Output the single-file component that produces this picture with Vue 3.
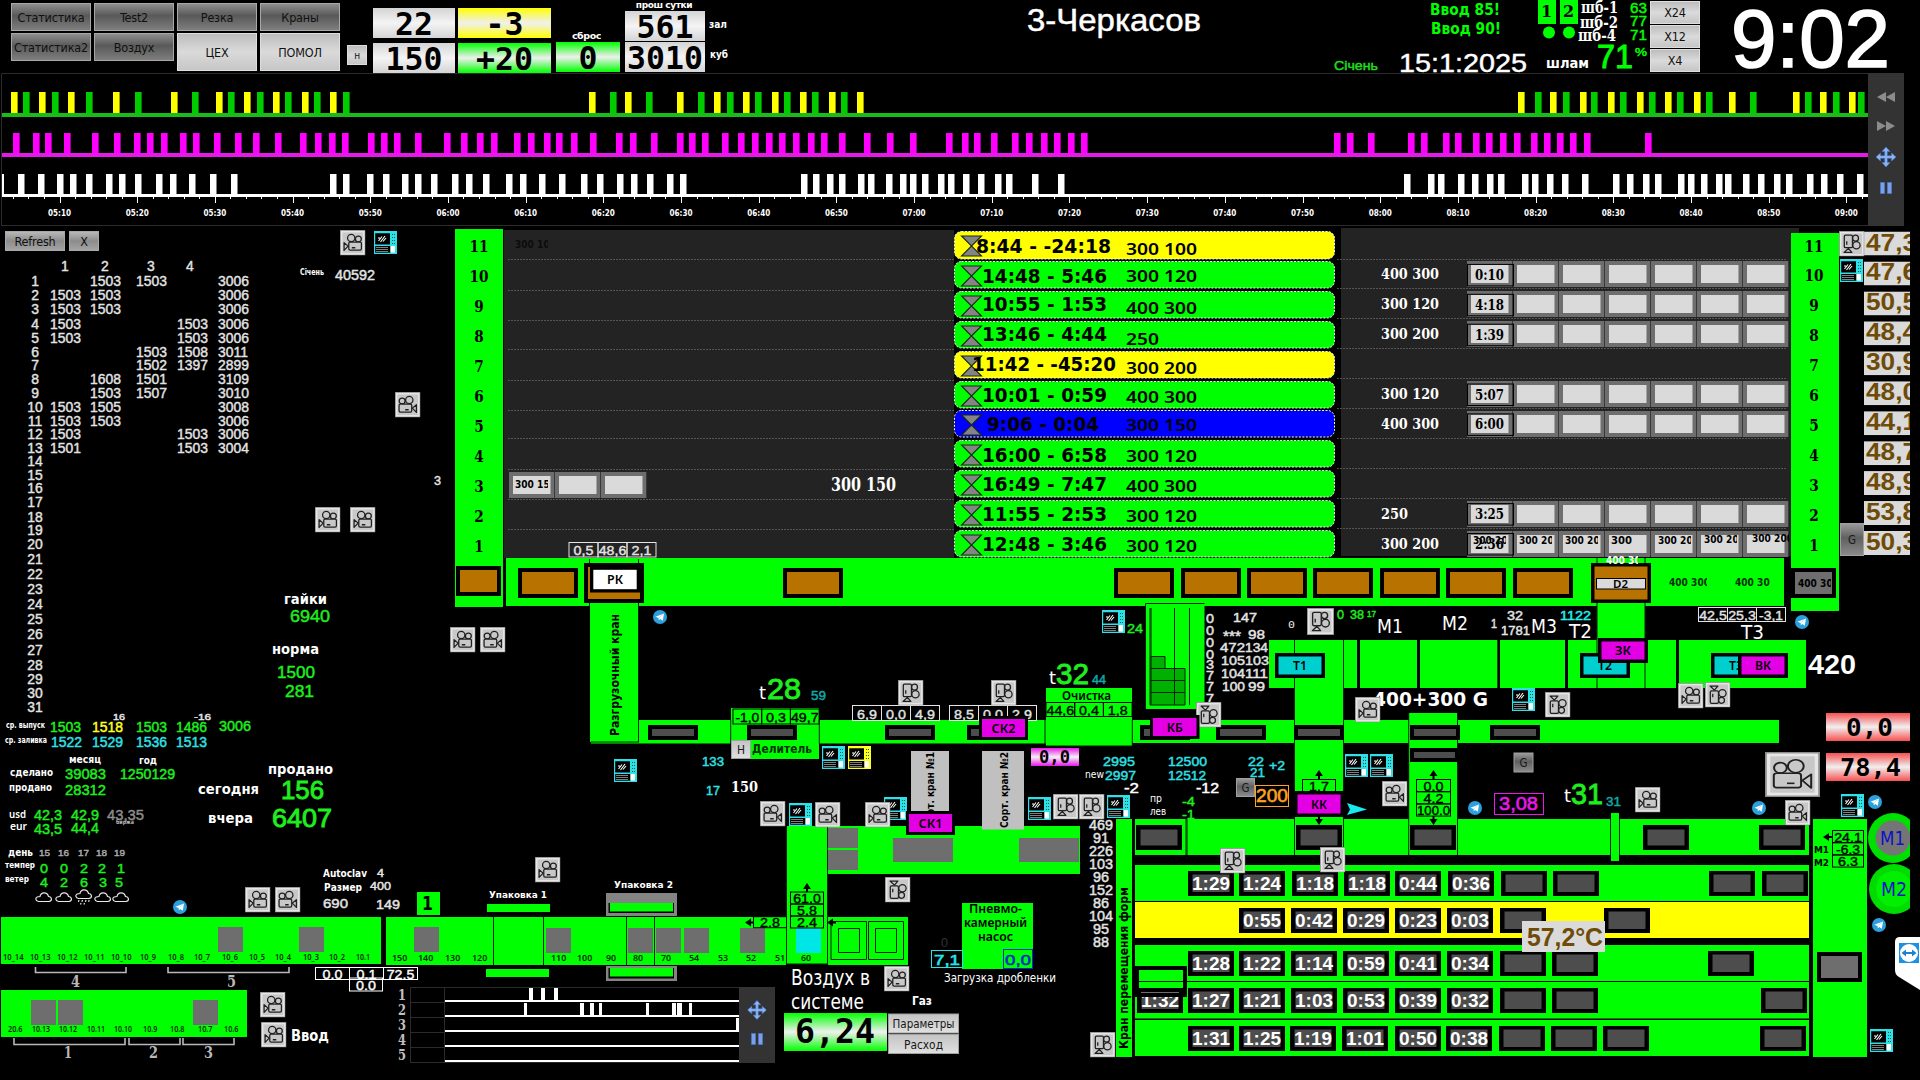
<script setup>
const navButtons = [
  ['Статистика', 'dark'], ['Test2', 'dark'], ['Резка', 'dark'], ['Краны', 'dark'],
  ['Статистика2', 'dark'], ['Воздух', 'dark'], ['ЦЕХ', 'light'], ['ПОМОЛ', 'light'],
]

// label rows: x, baseline, width, size, colour, text, font class
const board = [
  [710, 28, 18, 10, '#fff', 'зал', 'tb'], [711, 58, 18, 10, '#fff', 'куб', 'tb'],
  [1028, 31, 174, 31, '#fff', '3-Черкасов', 'am'],
  [1335, 70, 44, 12, '#1fdc1f', 'Січень', 'am'],
  [1400, 72, 128, 26, '#fff', '15:1:2025', 'am'],
  [1431, 15, 70, 15, '#00ff00', 'Ввод 85!', 'tb'], [1432, 34, 70, 15, '#00ff00', 'Ввод 90!', 'tb'],
  [1582, 13, 37, 16, '#fff', 'шб-1', 's'], [1581, 28, 38, 16, '#fff', 'шб-2', 's'], [1579, 41, 38, 16, '#fff', 'шб-4', 's'],
  [1631, 13, 17, 15, '#00ff00', '63', 'am'], [1631, 26, 17, 14, '#00ff00', '77', 'am'], [1631, 40, 17, 14, '#00ff00', '71', 'am'],
  [1547, 68, 43, 14, '#fff', 'шлам', 'tb'],
  [1598, 68, 36, 34, '#00ff00', '71', 'ah'], [1636, 56, 12, 11, '#00ff00', '%', 'am'],
]

const yellowBars = [11, 39, 68, 113, 171, 216, 244, 273, 302, 330, 589, 625, 677, 714, 743, 772, 800, 829, 857, 1518, 1550, 1580, 1608, 1637, 1665, 1694, 1729, 1793, 1820, 1849]
const greenBars = [23, 52, 86, 135, 192, 228, 257, 285, 314, 343, 610, 646, 698, 727, 755, 784, 812, 841, 1535, 1563, 1591, 1620, 1649, 1677, 1706, 1750, 1805, 1833, 1858]
const magentaBars = [13, 33, 45, 64, 92, 114, 134, 147, 161, 180, 193, 214, 235, 253, 275, 300, 315, 329, 342, 368, 381, 394, 415, 444, 461, 477, 491, 514, 528, 544, 556, 571, 590, 616, 630, 651, 677, 689, 702, 722, 738, 752, 766, 779, 793, 808, 821, 839, 864, 887, 910, 946, 962, 974, 991, 1012, 1026, 1041, 1054, 1068, 1081, 1334, 1347, 1368, 1408, 1421, 1443, 1455, 1473, 1486, 1500, 1514, 1531, 1544, 1557, 1570, 1584, 1645]
const whiteBars = [18, 38, 57, 70, 86, 106, 119, 135, 156, 170, 189, 210, 231, 330, 343, 367, 383, 402, 415, 431, 452, 466, 483, 506, 520, 539, 559, 581, 597, 617, 631, 647, 667, 680, 801, 813, 827, 839, 858, 868, 886, 900, 910, 922, 938, 948, 963, 978, 995, 1006, 1032, 1058, 1404, 1428, 1438, 1458, 1472, 1487, 1498, 1522, 1532, 1547, 1562, 1582, 1613, 1627, 1643, 1655, 1678, 1688, 1701, 1716, 1725, 1743, 1758, 1774, 1786, 1807, 1821, 1837, 1857]
const ticks = []
for (let i = -3; i <= 117; i++) ticks.push([Math.round(59.5 + i * 15.538) + 0.5, i % 5 === 0 ? 6 : 2])
const hours = Array.from({ length: 24 }, (_, i) => {
  const m = 310 + i * 10
  return [59.5 + i * 77.69, String(Math.floor(m / 60)).padStart(2, '0') + ':' + String(m % 60).padStart(2, '0')]
})

const dayValues = {
  1: ['', '1503', '1503', '', '3006'], 2: ['1503', '1503', '', '', '3006'], 3: ['1503', '1503', '', '', '3006'],
  4: ['1503', '', '', '1503', '3006'], 5: ['1503', '', '', '1503', '3006'], 6: ['', '', '1503', '1508', '3011'],
  7: ['', '', '1502', '1397', '2899'], 8: ['', '1608', '1501', '', '3109'], 9: ['', '1503', '1507', '', '3010'],
  10: ['1503', '1505', '', '', '3008'], 11: ['1503', '1503', '', '', '3006'], 12: ['1503', '', '', '1503', '3006'],
  13: ['1501', '', '', '1503', '3004'],
}
const dayLines = [285, 299, 313, 328, 342, 356, 369, 383, 397, 411, 425, 438, 452, 465, 479, 492, 506, 521, 534, 548, 563, 578, 593, 608, 623, 638, 654, 669, 683, 697, 711, 726]
const days = Array.from({ length: 31 }, (_, i) => ({
  n: i + 1, v: dayValues[i + 1] || ['', '', '', '', ''], h: dayLines[i + 1] - dayLines[i],
}))

const G = '#00ff00'
const W = '#e4e4e4'
const C = '#2fe0e6'
const L = '#1fee1f'
const K = '#000'

const chambers = [
  { n: 11, y: 231, h: 28, c: '#ffff00', t: '8:44 - -24:18', x: 976, w: 135, b: 253, s: '300 100', sb: 255 },
  { n: 10, y: 261, h: 27, c: G, t: '14:48 - 5:46', b: 283, s: '300 120', sb: 282, r: '400 300', rt: '0:10' },
  { n: 9, y: 291, h: 27, c: G, t: '10:55 - 1:53', b: 311, s: '400 300', sb: 314, r: '300 120', rt: '4:18' },
  { n: 8, y: 321, h: 27, c: G, t: '13:46 - 4:44', b: 341, s: '250', sb: 345, r: '300 200', rt: '1:39' },
  { n: 7, y: 351, h: 27, c: '#ffff00', t: '11:42 - -45:20', x: 972, w: 144, b: 371, s: '300 200', sb: 374 },
  { n: 6, y: 381, h: 27, c: G, t: '10:01 - 0:59', b: 402, s: '400 300', sb: 403, r: '300 120', rt: '5:07' },
  { n: 5, y: 410, h: 27, c: '#0000ff', t: '9:06 - 0:04', x: 987, w: 112, b: 431, s: '300 150', sb: 431, r: '400 300', rt: '6:00' },
  { n: 4, y: 440, h: 27, c: G, t: '16:00 - 6:58', b: 462, s: '300 120', sb: 462 },
  { n: 3, y: 470, h: 27, c: G, t: '16:49 - 7:47', b: 491, s: '400 300', sb: 492 },
  { n: 2, y: 500, h: 27, c: G, t: '11:55 - 2:53', b: 521, s: '300 120', sb: 522, r: '250', rt: '3:25' },
  { n: 1, y: 530, h: 27, c: G, t: '12:48 - 3:46', b: 551, s: '300 120', sb: 552, r: '300 200', rt: '2:36' },
]
const leftLines = [259.5, 290.5, 320.5, 349.5, 380.5, 410.5, 438.5, 469.5, 499.5, 529.5]
const rightLines = [259.5, 288.5, 318.5, 348.5, 378.5, 408.5, 438.5, 468.5, 498.5, 528.5]
const temps = ['47,3', '47,6', '50,5', '48,4', '30,9', '48,0', '44,1', '48,7', '48,9', '53,8', '50,3']

// labels cut by the edge of their field: x, baseline, visible width, colour, text
const cut = [
  [1473, 544, 33, K, '300 200'], [1519, 544, 33, K, '300 200'], [1565, 544, 33, K, '300 200'], [1658, 544, 33, K, '300 200'], [1704, 543, 33, K, '300 200'],
  [1611, 544, 33, K, '300'], [1752, 542, 37, K, '300 200'],
  [515, 488, 33, K, '300 150'], [515, 248, 33, '#0c0c0c', '300 100'],
  [1669, 586, 38, '#033003', '400 300'], [1735, 586, 35, '#033003', '400 300'], [1798, 587, 33, K, '400 300'], [1606, 564, 32, '#fff', '400 300'],
]

// filled areas of the floor plan: x, y, width, height, colour
const areas = [
  [455, 229, 48, 378, G], [1791, 233, 48, 378, G], [506, 558, 1278, 48, G],
  [590, 606, 48, 136, G], [591, 720, 541, 23.5, G], [1132, 720, 647, 23, G],
  [731, 708, 88, 51, G], [1046, 688, 86, 58, G], [1146, 604, 58.5, 105, G],
  [1269, 640, 537, 48, G], [1295, 688, 48, 131, G], [1409, 713, 48, 106, G], [1597, 606, 48, 34, G],
  [1135, 819, 674, 36, G], [1611, 813, 8, 48, G], [1116, 819, 16, 238, G], [1813, 819, 54, 238, G],
  [1135, 865, 674, 36, G], [1135, 902, 674, 36, '#ffff00'], [1135, 945, 674, 36, G], [1135, 982, 674, 36.5, G], [1135, 1020, 674, 36, G],
  [826, 826, 254, 48, G], [787, 826, 40, 138, G], [962, 903, 71, 66, G],
  [1, 917, 380, 47, G], [386, 917, 401, 48, G], [827, 917, 81, 48, G], [1, 990, 246, 47, G], [417, 892, 23, 23, G],
  [487, 904, 63, 8, G], [486, 969, 63, 8, G],
  [606, 893, 71, 23, '#848484'], [608.5, 903, 65.5, 10, K], [610, 903, 63, 8.5, G],
  [606, 966, 71, 15, '#848484'], [608.5, 968, 65.5, 10.5, K], [610, 968, 63, 8.5, G],
  [1357, 640, 3, 48, K], [1417, 640, 3, 48, K], [1497.3, 640, 2.7, 48, K], [1565, 640, 3, 48, K], [1676, 640, 3, 48, K],
  [1150, 656, 15, 12, '#00b000'], [1150, 668, 35, 37, '#00b000'],
  [911, 751, 38, 60, '#c0c0c0'], [982, 751, 42, 78.5, '#c0c0c0'],
  ...[[218, 927], [299, 927], [414, 927], [546, 928], [628, 928], [656, 928], [684, 928], [740, 928], [31, 1000], [58, 1000], [193, 1000]].map(([x, y]) => [x, y, 25, 25, '#6e6e6e']),
  [828, 828, 30, 20, '#6e6e6e'], [828, 850, 30, 20, '#6e6e6e'], [893, 838, 60, 24, '#6e6e6e'], [1019, 838, 60, 24, '#6e6e6e'],
  [796, 928, 25, 25, '#00e5e5'],
]
const lines = [
  'M589.5 559V606M638.5 559V742', 'M591 742H639', 'M1597 558V688M1645 558V688', 'M1294.5 640V855M1343.5 640V855', 'M1408.7 713V855M1457.5 713V855',
  'M1187 819V855M1186 819V855', 'M1610.5 819V855M1619.5 819V855', 'M730.7 720V744M819.3 720V744M1132.3 720V746M1045 720V744M1132 746H1046',
  'M493.5 917V965M543.5 917V965M626.5 917V965M654.5 917V965M786.5 826V965M827.5 826V965M787 964H827',
  'M1145.5 709V603.5H1204.5', 'M1150 608V705H1185V668.5H1165V656.5H1151M1150 668.5H1165M1150 680.5H1185M1150 692.5H1185M1174.5 608V705M1189.5 608V705M1151 608V705',
  'M831 921.5H866.5V959.5H831ZM838.5 928.5H859.5V952.5H838.5ZM868.5 921.5H903.5V959.5H868.5ZM875.5 928.5H896.5V952.5H875.5Z',
]

// framed carriers: x, y, width, height, fill, frame thickness
const O = '#b87200'
const D = '#4d4d4d'
const carriers = [
  [456, 566, 45, 30, O, 4], [518, 568, 60, 30, O, 4], [584, 563, 60, 40, O, 4], [783, 568, 60, 30, O, 4],
  ...[1114, 1181, 1247, 1313, 1380, 1446, 1513].map(x => [x, 568, 60, 30, O, 4]),
  [1591, 563, 60, 40, O, 3.5], [1791, 568, 45, 30, '#6e6e6e', 4],
  ...[648, 747, 885, 967, 1140, 1216, 1294, 1410, 1490].map(x => [x, 725, 50, 15, D, 4]),
  [1410, 748, 49, 14, D, 4],
  ...[1136, 1296, 1410, 1643, 1759].map(x => [x, 825, 46, 25, D, 4.5]),
  [1817, 952, 45, 30, '#6e6e6e', 4],
]
const forms = [
  { y: 871, c: [[1188, '1:29'], [1239, '1:24'], [1292, '1:18'], [1344, '1:18'], [1395, '0:44'], [1448, '0:36'], [1501], [1553], [1709], [1762]] },
  { y: 908, c: [[1239, '0:55'], [1291, '0:42'], [1343, '0:29'], [1395, '0:23'], [1447, '0:03'], [1500], [1604]] },
  { y: 951, c: [[1188, '1:28'], [1239, '1:22'], [1291, '1:14'], [1343, '0:59'], [1395, '0:41'], [1447, '0:34'], [1500], [1552], [1708]] },
  { y: 988, c: [[1137, '1:32'], [1188, '1:27'], [1239, '1:21'], [1291, '1:03'], [1343, '0:53'], [1395, '0:39'], [1447, '0:32'], [1500], [1552], [1761]] },
  { y: 1026, c: [[1188, '1:31'], [1239, '1:25'], [1290, '1:19'], [1342, '1:01'], [1395, '0:50'], [1446, '0:38'], [1499], [1551], [1603], [1760]] },
]

// coordinate readouts: x, y, cell width, cell height, colour, values, vertical
const readouts = [
  [569, 542.5, 29, 14.5, W, ['0,5', '48,6', '2,1']], [733, 709, 28.7, 15, K, ['-1,0', '0,3', '49,7']],
  [852.5, 705.5, 29, 15, W, ['6,9', '0,0', '4,9']], [949.5, 705.5, 29, 15, W, ['8,5', '0,0', '2,9']],
  [1046, 702.5, 28.7, 14, K, ['44,6', '0,4', '1,8']], [1698.5, 607.5, 29, 14, W, ['42,5', '25,3', '-3,1']],
  [790.5, 892, 33, 12, K, ['61.0', '5.8', '2.4'], 1], [753.5, 916.7, 33, 11, K, ['2.8']],
  [1302.5, 779.5, 33, 12, K, ['1.7']], [1416.5, 779.5, 34, 12.2, K, ['0.0', '4.2', '100.0'], 1],
  [1832.5, 830.5, 31, 12.2, K, ['24.1', '-6.3', '6.3'], 1],
  [315.5, 967.5, 34, 12, '#fff', ['0.0', '0.1', '72.5']], [349.5, 978, 33, 13, '#fff', ['0.0']],
]
const cells = readouts.flatMap(([x, y, w, h, c, v, vert]) => v.map((t, i) => {
  const cx = x + (vert ? 0 : i * w)
  const cy = y + (vert ? i * h : 0)
  const tw = Math.min(w - 1, t.replace(/[.,-]/g, '').length * 7.7 + 4.5 + (t[0] === '-' ? 4 : 0))
  return { x: cx, y: cy, w, h, c, t, tw, tx: cx + (w - tw) / 2, b: cy + h - (h > 13 ? 2 : 1) }
}))

const texts = [
  [300, 275, 24, 8, '#fff', 'Січень', 'tb'], [335, 280, 40, 14, W, '40592', 'am'], [434, 485, 7, 13, W, '3', 'am'],
  [284, 604, 43, 14, '#fff', 'гайки', 'tb'], [290, 622, 40, 17, L, '6940', 'am'], [272, 654, 47, 14, '#fff', 'норма', 'tb'],
  [277, 678, 38, 17, L, '1500', 'am'], [285, 697, 29, 17, L, '281', 'am'],
  [113, 720, 12, 9.5, W, '16', 'am'], [194, 720, 17, 9.5, W, '-16', 'am'],
  [6, 728, 39, 8, '#fff', 'ср. выпуск', 'tb'], [5, 743, 42, 8, '#fff', 'ср. заливка', 'tb'],
  [50, 732, 31, 14, L, '1503', 'am'], [92, 732, 31, 14, '#ffff20', '1518', 'am'], [136, 732, 31, 14, L, '1503', 'am'], [176, 732, 31, 14, L, '1486', 'am'], [219, 731, 32, 14, L, '3006', 'am'],
  [51, 747, 31, 14, C, '1522', 'am'], [92, 747, 31, 14, C, '1529', 'am'], [136, 747, 31, 14, C, '1536', 'am'], [176, 747, 31, 14, C, '1513', 'am'],
  [69, 763, 32, 10, '#fff', 'месяц', 'tb'], [139, 764, 18, 10, '#fff', 'год', 'tb'], [10, 776, 43, 10, '#fff', 'сделано', 'tb'], [9, 791, 43, 10, '#fff', 'продано', 'tb'],
  [65, 779, 41, 14, L, '39083', 'am'], [120, 779, 55, 14, L, '1250129', 'am'], [65, 795, 41, 14, L, '28312', 'am'],
  [268, 774, 65, 14, '#fff', 'продано', 'tb'], [281, 799, 43, 26, L, '156', 'ah'], [198, 794, 61, 14, '#fff', 'сегодня', 'tb'],
  [272, 827, 60, 26, L, '6407', 'ah'], [208, 823, 45, 14, '#fff', 'вчера', 'tb'],
  [9, 818, 17, 11, '#fff', 'usd', 'tm'], [10, 830, 17, 11, '#fff', 'eur', 'tm'], [34, 820, 28, 14, L, '42,3', 'am'], [71, 820, 28, 14, L, '42,9', 'am'],
  [107, 820, 37, 14, '#8c8c8c', '43,35', 'am'], [116, 824, 18, 6, '#bbb', 'биржа', 'tb'], [34, 834, 28, 14, L, '43,5', 'am'], [71, 833, 28, 14, L, '44,4', 'am'],
  [8, 856, 25, 10, '#fff', 'день', 'tb'], ...[[39, '15'], [58, '16'], [78, '17'], [96, '18'], [114, '19']].map(([x, t]) => [x, 856, 11, 9, '#a8a8a8', t, 'am']),
  [5, 868, 30, 9, '#fff', 'темпер', 'tb'], ...[[40, '0'], [60, '0'], [80, '2'], [98, '2'], [117, '1']].map(([x, t]) => [x, 873, 8, 13.5, L, t, 'am']),
  [5, 882, 24, 9, '#fff', 'ветер', 'tb'], ...[[40, '4'], [60, '2'], [80, '6'], [99, '3'], [115, '5']].map(([x, t]) => [x, 887, 8, 13.5, L, t, 'am']),
  [323, 877, 44, 10, '#fff', 'Autoclav', 'tb'], [377, 877, 7, 11, W, '4', 'am'], [324, 891, 38, 10, '#fff', 'Размер', 'tb'], [370, 890, 21, 11, W, '400', 'am'],
  [323, 908, 25, 13, W, '690', 'am'], [376, 909, 24, 13, W, '149', 'am'], [422, 910, 11, 19, K, '1', 'tb'],
  [71, 987, 9, 16, '#b8b8b8', '4', 's'], [227, 987, 9, 16, '#b8b8b8', '5', 's'],
  [64, 1058, 8, 16, '#b8b8b8', '1', 's'], [149, 1058, 9, 16, '#b8b8b8', '2', 's'], [204, 1058, 9, 16, '#b8b8b8', '3', 's'],
  [291, 1041, 38, 15, '#fff', 'Ввод', 'tb'],
  [489, 898, 58, 9, '#fff', 'Упаковка 1', 'tb'], [614, 888, 59, 9, '#fff', 'Упаковка 2', 'tb'],
  ...[[3, '10_14'], [30, '10_13'], [57, '10_12'], [84, '10_11'], [111, '10_10']].map(([x, t]) => [x, 960, 20.5, 8, '#052a05', t, 'tm']),
  ...[[140, '10_9'], [168, '10_8'], [194, '10_7'], [222, '10_6'], [249, '10_5'], [275, '10_4'], [303, '10_3'], [329, '10_2'], [356, '10.1']].map(([x, t]) => [x, 960, t === '10.1' ? 14 : 16, 8, '#052a05', t, 'tm']),
  ...[[392, '150'], [418, '140'], [445, '130'], [472, '120'], [551, '110'], [577, '100'], [606, '90'], [633, '80'], [661, '70'], [689, '54'], [718, '53'], [746, '52'], [775, '51'], [801, '60']].map(([x, t]) => [x, 960.5, t.length * 5.1, 8.5, '#052a05', t, 'tm']),
  ...[[8, '20.6'], [32, '10.13'], [59, '10.12'], [87, '10.11'], [114, '10.10'], [143, '10.9'], [170, '10.8'], [198, '10.7'], [224, '10.6']].map(([x, t]) => [x, 1032, t.length * 3.6, 8, '#052a05', t, 'tm']),
  ...[1, 2, 3, 4, 5].map(n => [398, 985 + n * 15, 8, 14, '#c0c0c0', String(n), 's']),
  [791, 985, 79, 21, '#fff', 'Воздух в', 't'], [791, 1009, 73, 21, '#fff', 'системе', 't'], [912, 1005, 20, 12, '#fff', 'Газ', 'tb'],
  [969, 913, 53, 12.5, K, 'Пневмо-', 'tm'], [964, 927, 63, 12.5, K, 'камерный', 'tm'], [978, 941, 35, 12.5, K, 'насос', 'tm'],
  [941, 947, 7, 12, '#333', '0', 'a'], [944, 982, 112, 12, '#fff', 'Загрузка дробленки', 't'],
  ...['469', '91', '226', '103', '96', '152', '86', '104', '95', '88'].map((t, i) => [t.length === 3 ? 1089 : 1093, 829.5 + i * 13, t.length * 8, 14, W, t, 'am']),
  [702, 766, 22, 13, C, '133', 'am'], [706, 795, 14, 13, C, '17', 'am'], [731, 792, 27, 14.5, '#fff', '150', 's'],
  [1103, 766, 32, 13.5, C, '2995', 'am'], [1105, 780, 31, 13.5, C, '2997', 'am'], [1085, 778, 19, 10, '#fff', 'new', 't'], [1124, 793, 15, 14, '#fff', '-2', 'am'],
  [1168, 766, 39, 13.5, C, '12500', 'am'], [1168, 780, 38, 13.5, C, '12512', 'am'], [1196, 793, 23, 14, '#fff', '-12', 'am'],
  [1248, 766, 16, 13.5, C, '22', 'am'], [1250, 777, 15, 13.5, C, '21', 'am'], [1269, 770, 16, 13, C, '+2', 'am'],
  [1150, 802, 12, 10.5, '#fff', 'пр', 't'], [1150, 815, 16, 10.5, '#fff', 'лев', 't'], [1182, 806, 13, 13, L, '-4', 'am'], [1182, 819, 13, 13, L, '-1', 'am'],
  [759, 699, 7, 18, '#fff', 't', 't'], [767, 699, 34, 29, L, '28', 'ah'], [811, 700, 15, 12, '#10a8a8', '59', 'am'],
  [1049, 684, 7, 18, '#fff', 't', 't'], [1056, 684, 33, 29, L, '32', 'ah'], [1092, 684, 14, 12, '#10a8a8', '44', 'am'],
  [1564, 802, 7, 18, '#fff', 't', 't'], [1571, 804, 32, 29, L, '31', 'ah'], [1606, 806, 15, 12, '#10a8a8', '31', 'am'],
  [1062, 700, 49, 12.5, K, 'Очистка', 'tm'], [752, 753, 60, 13, '#033003', 'Делитель', 'tb'], [1127, 633, 16, 12, L, '24', 'am'],
  ...['0', '0', '0', '0', '3', '7', '7', '7'].map((t, i) => [1206, [623, 635, 647, 659, 669, 680, 691, 703][i], 8, 12, W, t, 'am']),
  [1233, 622, 24, 12.5, W, '147', 'am'], [1223, 641, 18, 14, W, '***', 'am'], [1248, 639, 17, 12.5, W, '98', 'am'],
  [1220, 652, 25, 12.5, W, '472', 'am'], [1245, 652, 23, 12.5, W, '134', 'am'], [1221, 665, 24, 12.5, W, '105', 'am'], [1245, 665, 24, 12.5, W, '103', 'am'],
  [1221, 678, 24, 12.5, W, '104', 'am'], [1245, 678, 23, 12.5, W, '111', 'am'], [1222, 691, 23, 12.5, W, '100', 'am'], [1248, 691, 17, 12.5, W, '99', 'am'],
  [1288, 628, 7, 9.5, W, '0', 'mr'], [1337, 619, 7, 12, L, '0', 'am'], [1350, 619, 14, 12, L, '38', 'am'], [1367, 617, 9, 9, L, '17', 'am'],
  [1377, 633, 26, 20, '#fff', 'М1', 't'], [1442, 630, 26, 20, '#fff', 'М2', 't'], [1531, 633, 26, 20, '#fff', 'М3', 't'],
  [1491, 628, 6, 12, W, '1', 'am'], [1507, 620, 16, 12.5, W, '32', 'am'], [1501, 635, 29, 12.5, W, '1781', 'am'], [1560, 620, 31, 12.5, '#20f0f0', '1122', 'am'],
  [1569, 638, 23, 20, '#fff', 'Т2', 't'], [1741, 639, 23, 20, '#fff', 'Т3', 't'],
  [1808, 674, 48, 27, '#fff', '420', 'ab'], [1373, 706, 115, 20, '#fff', '400+300 G', 'tb'],
  [831, 491, 65, 18, '#fff', '300 150', 's'],
  [1814, 853, 15, 9, K, 'М1', 'tb'], [1814, 866, 15, 9, K, 'М2', 'tb'],
]
const strokes = { am: 0.45, ah: 0.9 }

// crane and transfer tags: x, y, width, height, colour, text, frame, text width
const tags = [
  [1275, 653, 50, 25, '#00cfcf', 'Т1', 3.5, 14], [1580, 653, 50, 25, '#00cfcf', 'Т2', 3.5, 14], [1711, 653, 50, 25, '#00cfcf', 'Т3', 3.5, 14],
  [1738, 653, 50, 25, '#e400e4', 'ВК', 3.5, 16], [1598, 638, 50, 25, '#e400e4', 'ЗК', 3.5, 16],
  [906, 811, 49, 24, '#e400e4', 'СК1', 3, 24], [979, 716, 49, 24, '#e400e4', 'СК2', 3, 24], [1150, 715, 49.5, 24, '#e400e4', 'КБ', 3, 16],
  [1294, 791, 50, 26, '#e400e4', 'КК', 3.5, 16],
  [590, 566.5, 50, 26, '#fff', 'РК', 3.3, 16],
]
const cams = [
  [340, 230, 'L'], [395, 392, 'R'], [315, 507, 'L'], [350, 507, 'L'], [450, 627, 'L'], [480, 627, 'R'], [898, 680, 'D'], [991, 680, 'D'],
  [1196, 702, 'U'], [1307, 608, 'D', 27, 27], [1355, 697, 'L'], [1545, 692, 'U'], [1678, 683, 'L'], [1705, 682, 'U'], [1839, 231, 'D'],
  [245, 887, 'L'], [275, 887, 'R'], [260, 992, 'L'], [261, 1022, 'L'], [760, 801, 'R'], [815, 802, 'R'], [865, 802, 'L'], [535, 857, 'L'],
  [885, 877, 'U'], [884, 966, 'L'], [1053, 794, 'D'], [1079, 794, 'D'], [1382, 781, 'R'], [1220, 848, 'D'], [1320, 847, 'D'], [1090, 1032, 'D'],
  [1765, 752, 'R', 55, 45], [1635, 787, 'L'], [1785, 800, 'R'],
]
const flips = { R: '', L: 'translate(25 0) scale(-1 1)', D: 'translate(25 0) rotate(90)', U: 'translate(25 0) rotate(90) translate(25 0) scale(-1 1)' }
const panels = [[374, 231], [1840, 259], [1102, 610], [1512, 688], [614, 759], [822, 746], [848, 746, '#ffff20'], [789, 803], [884, 797], [1028, 797], [1107, 795], [1345, 754], [1370, 754], [1841, 794], [1870, 1029]]
const telegrams = [[660, 617], [1802, 622], [180, 907], [1475, 808], [1759, 808], [1875, 802], [1879, 925]]
const keys = [
  [1840, 523, 24, 33, 'G', 'dk'], [1236, 778, 19, 19, 'G', 'dk'], [1513.5, 752.5, 20, 20, 'G', 'dk'], [731, 740, 20, 19, 'Н', 'lt'],
  [888, 1013.5, 71, 20, 'Параметры', 'lt'], [888, 1034, 71, 20, 'Расход', 'lt'],
]
const keyWidth = t => (t.length === 1 ? 8 : t.length > 6 ? 62 : 39)
const gauges = [
  [1031, 748, 48, 18, 'gm', '0,0', 1039, 763, 31, 18], [784, 1013, 103, 38, 'gg', '6,24', 795, 1043, 80, 33],
  [1826, 713, 84, 28, 'gr', '0,0', 1846, 736, 47, 24], [1826, 753, 84, 28, 'gr', '78,4', 1840, 776, 61, 24],
]
const framed = [
  [1255.5, 785.5, 33, 21, '#ffa020', '200', 1256, 802, 32, 18], [1494.5, 793.5, 49, 21, '#e818e8', '3,08', 1499, 810, 39, 18],
  [1003.5, 949.5, 29, 19, '#0030c8', '0,0', 1005, 965, 26, 15], [931.5, 950.5, 31, 17, '#20e8e8', '7,1', 934, 965, 26, 15],
]
const arrows = [
  [807, 883, 0], [1319, 770, 0], [1433.5, 770, 0], [1319, 825, 180], [1433.5, 825, 180], [745, 922.5, -90], [1823, 837, -90], [827, 922.5, -90],
]
const clouds = [[35, 892], [55, 892], [75, 889, true], [94, 892], [112, 892]]
const miniBars = [[529, 1], [541, 1], [554, 1], [524, 2, 3], [580, 2], [590, 2], [599, 2, 3], [646, 2, 3], [672, 2], [677, 2, 5], [689, 2, 3], [736, 3, 3]]
</script>

<template>
  <div class="screen">
    <header class="top">
      <nav class="nav">
        <button v-for="b in navButtons" :key="b[0]" :class="b[1]">{{ b[0] }}</button>
      </nav>
      <button class="light mini">н</button>
      <div class="pairs">
        <div class="ind grey">22</div><div class="ind yellow">-3</div>
        <div class="ind grey">150</div><div class="ind green">+20</div>
      </div>
      <div class="reset"><span>сброс</span><div class="ind green">0</div></div>
      <div class="past"><span>прош сутки</span><div class="ind grey">561</div><div class="ind grey">3010</div></div>
      <svg class="board" width="945" height="73" viewBox="706 0 945 73">
        <text v-for="(t, i) in board" :key="i" :x="t[0]" :y="t[1]" :textLength="t[2]" lengthAdjust="spacingAndGlyphs" :font-size="t[3]" :fill="t[4]" :stroke="t[4]" :stroke-width="strokes[t[6]] || 0" :class="t[6]">{{ t[5] }}</text>
        <rect x="1539" width="18" height="24" y="0" fill="#00ff00" /><rect x="1561" width="18" height="24" y="0" fill="#00ff00" />
        <text x="1542" y="17" class="s" font-size="16" textLength="10">1</text>
        <text x="1564" y="17" class="s" font-size="16" textLength="10">2</text>
        <circle cx="1550" cy="32.5" r="6" fill="#00ff00" /><circle cx="1570" cy="32.5" r="6" fill="#00ff00" />
      </svg>
      <div class="speeds">
        <button class="light">X24</button><button class="light">X12</button><button class="light">X4</button>
      </div>
      <svg class="clock" width="219" height="73" viewBox="1701 0 219 73">
        <text x="1732" y="67" textLength="159" lengthAdjust="spacingAndGlyphs" font-size="82" fill="#fff" stroke="#fff" stroke-width="1.6" class="a">9:02</text>
      </svg>
    </header>

    <section class="trend">
      <svg width="1868" height="153" viewBox="0 73 1868 153">
        <path d="M1.5 226V73.5H1868M1.5 225.5H1868" stroke="#2b2b2b" fill="none" />
        <rect v-for="x in yellowBars" :key="'y' + x" :x="x" y="92" width="6.6" height="21" fill="#ffff00" />
        <rect v-for="x in greenBars" :key="'g' + x" :x="x" y="92" width="6.6" height="21" fill="#00cc00" />
        <rect x="2" y="113" width="1866" height="4" fill="#1abc1a" />
        <rect v-for="x in magentaBars" :key="'m' + x" :x="x" y="133" width="6.6" height="20" fill="#ff00ff" />
        <rect x="2" y="153" width="1866" height="4" fill="#e61ae6" />
        <rect x="2" y="174" width="2" height="20" fill="#fff" />
        <rect v-for="x in whiteBars" :key="'w' + x" :x="x" y="174" width="6.5" height="20" fill="#fff" />
        <rect x="2" y="194" width="1866" height="3" fill="#fff" />
        <rect v-for="t in ticks" :key="t[0]" :x="t[0] - 0.5" y="197" width="1" :height="t[1]" fill="#fff" />
        <text v-for="h in hours" :key="h[1]" :x="h[0] - 11.5" y="216" textLength="23" lengthAdjust="spacingAndGlyphs" font-size="8" fill="#fff" class="tb">{{ h[1] }}</text>
      </svg>
      <div class="tools">
        <svg viewBox="0 0 18 12" width="18" height="12"><path d="M9 1V11L0 6ZM18 1V11L9 6Z" fill="#8c8c8c" /></svg>
        <svg viewBox="0 0 18 12" width="18" height="12"><path d="M0 1V11L9 6ZM9 1V11L18 6Z" fill="#8c8c8c" /></svg>
        <svg viewBox="0 0 20 20" width="20" height="20"><use href="#move" /></svg>
        <svg viewBox="0 0 12 12" width="12" height="12"><use href="#pause" /></svg>
      </div>
    </section>

    <main class="hall">
      <aside class="stats">
        <div class="actions"><button class="mid">Refresh</button><button class="mid">X</button></div>
        <div class="row head"><span></span><b>1</b><b>2</b><b>3</b><b>4</b></div>
        <div v-for="d in days" :key="d.n" class="row" :style="{ height: d.h + 'px' }">
          <i>{{ d.n }}</i><b v-for="(v, k) in d.v" :key="k">{{ v }}</b>
        </div>
      </aside>

      <svg class="mimic" width="1920" height="854" viewBox="0 226 1920 854">
        <defs>
          <linearGradient id="gg" x2="0" y2="1"><stop offset="0" stop-color="#00ff00" /><stop offset=".5" stop-color="#f0f0f0" /><stop offset="1" stop-color="#00ff00" /></linearGradient>
          <linearGradient id="gm" x2="0" y2="1"><stop offset="0" stop-color="#e818e8" /><stop offset=".5" stop-color="#f4f0f4" /><stop offset="1" stop-color="#e818e8" /></linearGradient>
          <linearGradient id="gr" x2="0" y2="1"><stop offset="0" stop-color="#f85050" /><stop offset=".5" stop-color="#f0f0f0" /><stop offset="1" stop-color="#f85050" /></linearGradient>
          <linearGradient id="lt" x2="0" y2="1"><stop offset="0" stop-color="#c4c4c4" /><stop offset="1" stop-color="#e0e0e0" /></linearGradient>
          <linearGradient id="dk" x2="0" y2="1"><stop offset="0" stop-color="#9c9c9c" /><stop offset=".45" stop-color="#606060" /><stop offset="1" stop-color="#8c8c8c" /></linearGradient>
          <symbol id="move" viewBox="0 0 20 20"><path d="M10 0L14 4.5H11.3V8.7H15.5V6L20 10L15.5 14V11.3H11.3V15.5H14L10 20L6 15.5H8.7V11.3H4.5V14L0 10L4.5 6V8.7H8.7V4.5H6Z" fill="#8ab4f8" stroke="#4a78c8" stroke-width=".6" /></symbol>
          <symbol id="pause" viewBox="0 0 12 12"><path d="M.5 .5H4.5V11.5H.5ZM7.5 .5H11.5V11.5H7.5Z" fill="#7aa0e8" stroke="#4a78c8" stroke-width=".8" /></symbol>
        </defs>

        <!-- storage hall -->
        <rect x="504" y="230" width="450" height="328" fill="#232323" />
        <path d="M1341 228H1799V233H1791V556H1341Z" fill="#232323" />
        <path v-for="y in leftLines" :key="'l' + y" :d="`M508 ${y}H954`" class="dash" />
        <path v-for="y in rightLines" :key="'r' + y" :d="`M1337 ${y}H1786`" class="dash" />

        <rect v-for="(a, i) in areas" :key="'a' + i" :x="a[0]" :y="a[1]" :width="a[2]" :height="a[3]" :fill="a[4]" />
        <path v-for="(l, i) in lines" :key="'p' + i" :d="l" stroke="#022002" fill="none" />

        <g v-for="(c, i) in chambers" :key="c.n">
          <text :x="479" :y="252 + i * 29.95" class="s" font-size="16.5" text-anchor="middle" :textLength="c.n > 9 ? 19 : 9.5" lengthAdjust="spacingAndGlyphs">{{ c.n }}</text>
          <text :x="1814" :y="251.5 + i * 29.95" class="s" font-size="16.5" text-anchor="middle" :textLength="c.n > 9 ? 19 : 9.5" lengthAdjust="spacingAndGlyphs">{{ c.n }}</text>
          <rect x="954.5" :y="c.y + .5" width="380" :height="c.h - .5" rx="7" :fill="c.c" stroke="#e8ffe8" stroke-dasharray="2 1.5" />
          <g :transform="`translate(961 ${c.y + 4.5})`"><path d="M.5 .5H20.5L.5 20.5H20.5Z" fill="#848484" stroke="#182818" stroke-width="1.1" /></g>
          <text :x="c.x || 982" :y="c.b" :textLength="c.w || 125" lengthAdjust="spacingAndGlyphs" class="tb" font-size="19">{{ c.t }}</text>
          <text x="1126" :y="c.sb" :textLength="c.s.length > 3 ? 71 : 33" lengthAdjust="spacingAndGlyphs" class="tm" font-size="16">{{ c.s }}</text>
          <template v-if="c.rt">
            <text x="1381" :y="249 + i * 29.98" :textLength="c.r.length > 3 ? 58 : 27" lengthAdjust="spacingAndGlyphs" class="s" font-size="14" fill="#fff">{{ c.r }}</text>
            <g v-for="k in 7" :key="k">
              <rect :x="1421 + k * 46" :y="231 + i * 30" width="45.3" height="26" fill="#6e6e6e" />
              <rect :x="1425 + k * 46" :y="235 + i * 30" width="37.5" height="18" fill="#dadada" />
            </g>
            <rect x="1467.5" :y="234.5 + i * 29.9" width="46" height="21.5" fill="none" stroke="#000" />
            <text x="1475" :y="250 + i * 29.9" textLength="29" lengthAdjust="spacingAndGlyphs" class="s" font-size="14">{{ c.rt }}</text>
          </template>
          <svg x="1864" :y="231.5 + i * 29.95" width="46" height="24">
            <rect width="46" height="24" fill="#dadada" />
            <text x="2" y="19" textLength="51" lengthAdjust="spacingAndGlyphs" class="ab" font-size="24" fill="#6e4c08">{{ temps[i] }}</text>
          </svg>
        </g>
        <g v-for="k in 3" :key="'tr' + k">
          <rect :x="463 + k * 46" y="472" width="45.3" height="26" fill="#6e6e6e" /><rect :x="467 + k * 46" y="476" width="37.5" height="18" fill="#dadada" />
        </g>

        <g v-for="(c, i) in carriers" :key="'c' + i">
          <rect :x="c[0]" :y="c[1]" :width="c[2]" :height="c[3]" fill="#000" />
          <rect :x="c[0] + c[5]" :y="c[1] + c[5]" :width="c[2] - c[5] * 2" :height="c[3] - c[5] * 2" :fill="c[4]" />
        </g>
        <svg v-for="(c, i) in cut" :key="'cut' + i" :x="c[0]" :y="c[1] - 10" :width="c[2]" height="12">
          <text x="0" y="10" :textLength="c[4].length > 3 ? 41 : 21" lengthAdjust="spacingAndGlyphs" class="tb" font-size="10.5" :fill="c[3]">{{ c[4] }}</text>
        </svg>
        <rect x="1596.5" y="578.5" width="49" height="10.5" fill="#dadada" stroke="#000" />
        <text x="1613" y="587.5" textLength="15" lengthAdjust="spacingAndGlyphs" class="tm" font-size="10.5">D2</text>

        <!-- form rows -->
        <g v-for="r in forms" :key="r.y">
          <g v-for="c in r.c" :key="c[0]">
            <rect :x="c[0]" :y="r.y" width="46" height="25" fill="#000" />
            <rect :x="c[0] + 4.5" :y="r.y + 3.5" width="37" height="17.5" :fill="D" />
            <text v-if="c[1]" :x="c[0] + 4" :y="r.y + 19" textLength="38" lengthAdjust="spacingAndGlyphs" class="ab" font-size="19" fill="#fff">{{ c[1] }}</text>
          </g>
        </g>
        <path d="M1135 966H1187V997H1135Z" />
        <rect x="1139" y="970" width="44" height="18" fill="#00ff00" /><path d="M1139 981.5H1183" stroke="#022002" />
        <path d="M1141 992.5H1179" stroke="#6e6e6e" />

        <g v-for="(c, i) in cells" :key="'k' + i">
          <rect :x="c.x" :y="c.y" :width="c.w" :height="c.h" fill="none" :stroke="c.c" />
          <text :x="c.tx" :y="c.b" :textLength="c.tw" lengthAdjust="spacingAndGlyphs" font-size="13.5" :fill="c.c" :stroke="c.c" stroke-width=".4" class="am">{{ c.t }}</text>
        </g>
        <text v-for="(t, i) in texts" :key="'t' + i" :x="t[0]" :y="t[1]" :textLength="t[2]" lengthAdjust="spacingAndGlyphs" :font-size="t[3]" :fill="t[4]" :stroke="t[4]" :stroke-width="strokes[t[6]] || 0" :class="t[6]">{{ t[5] }}</text>

        <g class="tb">
          <text transform="translate(618.5 736) rotate(-90)" textLength="122" lengthAdjust="spacingAndGlyphs" font-size="12">Разгрузочный кран</text>
          <text transform="translate(934 828) rotate(-90)" textLength="76" lengthAdjust="spacingAndGlyphs" font-size="11">Сорт. кран №1</text>
          <text transform="translate(1008 828) rotate(-90)" textLength="76" lengthAdjust="spacingAndGlyphs" font-size="11">Сорт. кран №2</text>
          <text transform="translate(1128 1049) rotate(-90)" textLength="162" lengthAdjust="spacingAndGlyphs" font-size="12.5">Кран перемещения форм</text>
        </g>

        <g v-for="(a, i) in arrows" :key="'ar' + i" :transform="`translate(${a[0]} ${a[1]}) rotate(${a[2]})`"><path d="M0 0L4 6H1V9H-1V6H-4Z" /></g>
        <path d="M1347 803L1367 809.5L1347 815L1350 809.5Z" fill="#18e8f0" />

        <g v-for="(g, i) in gauges" :key="'ga' + i">
          <rect :x="g[0]" :y="g[1]" :width="g[2]" :height="g[3]" :fill="`url(#${g[4]})`" />
          <text :x="g[6]" :y="g[7]" :textLength="g[8]" lengthAdjust="spacingAndGlyphs" class="m" :font-size="g[9]">{{ g[5] }}</text>
        </g>
        <g v-for="(f, i) in framed" :key="'f' + i">
          <rect :x="f[0]" :y="f[1]" :width="f[2]" :height="f[3]" fill="none" :stroke="f[4]" />
          <text :x="f[6]" :y="f[7]" :textLength="f[8]" lengthAdjust="spacingAndGlyphs" class="am" :font-size="f[9]" :fill="f[4]" :stroke="f[4]" stroke-width=".6">{{ f[5] }}</text>
        </g>
        <rect x="1522" y="921" width="83" height="31" fill="#dadada" />
        <text x="1527" y="946" textLength="76" lengthAdjust="spacingAndGlyphs" class="ab" font-size="25" fill="#6e4c08">57,2°C</text>

        <!-- mixers -->
        <svg x="1866" y="812" width="44" height="104" viewBox="1866 812 44 104">
          <circle cx="1893" cy="838" r="25" fill="#00e000" /><circle cx="1893" cy="838" r="17.5" fill="#757575" />
          <circle cx="1894" cy="889" r="25" fill="#00dc00" /><circle cx="1894" cy="889" r="18" fill="#00f000" />
          <text x="1880" y="845" textLength="25" lengthAdjust="spacingAndGlyphs" class="t" font-size="20" fill="#1010c8">М1</text>
          <text x="1881" y="896" textLength="26" lengthAdjust="spacingAndGlyphs" class="t" font-size="20" fill="#1010c8">М2</text>
        </svg>

        <!-- brackets, weather and small trend -->
        <path d="M35.5 967V972.5H126V967M168 967V972.5H289V967M14 1038V1044.5H125V1038M129 1038V1044.5H180V1038M183 1038V1044.5H234V1038" fill="none" stroke="#b8b8b8" stroke-width="1.6" />
        <g v-for="c in clouds" :key="c[0]" :transform="`translate(${c[0]} ${c[1]})`" fill="none" stroke="#e8e8e8" stroke-width="1.2">
          <path d="M3.5 9.5H14Q16.5 9 16.5 7Q16 4.5 13.5 4.5Q12.5 .7 9 .8Q5.5 1 5 4.5Q1 4.5 .8 7Q1 9 3.5 9.5Z" />
          <path v-if="c[2]" d="M4 11L3.4 13M7.5 11L6.9 13M11 11L10.4 13M14.2 11L13.6 13M6 14L5.6 15.5M9.5 14L9 15.5" stroke-dasharray="2 .6" />
        </g>
        <path d="M410.5 987V1062.5M444.5 987V1062.5M410 987.5H775M410 1002.5H444M410 1017.5H444M410 1032.5H444M410 1047.5H444M410 1062.5H775" stroke="#2b2b2b" fill="none" />
        <rect v-for="n in 5" :key="'ml' + n" x="445" :y="985 + n * 15" width="294" height="2" fill="#fff" />
        <rect v-for="b in miniBars" :key="'mb' + b[0]" :x="b[0]" :y="973 + b[1] * 15" :width="b[2] || 4" height="13" fill="#fff" />
        <rect x="739" y="987" width="36" height="76" fill="#333" />
        <use href="#move" x="747.5" y="1000" width="19" height="20" /><use href="#pause" x="751" y="1033" width="12" height="12" />

        <!-- operator controls -->
        <g v-for="(p, i) in panels" :key="'pl' + i" :transform="`translate(${p[0]} ${p[1]})`">
          <rect width="23" height="23" :fill="p[2] || '#30e0e8'" />
          <path d="M1.2 2.2H16V13.5H1.2ZM1.2 15H16.5V21.8H1.2Z" /><rect x="16.5" y="15" width="4.5" height="6.5" fill="#fff" />
          <path d="M4.5 10L8 5.5M6.5 11L11 5M9 10.5L12 7M4 7H6" stroke="#fff" stroke-width="1.1" />
          <path d="M2.5 16.5H14.5M2.5 18.5H14.5M2.5 20.5H14.5" stroke="#fff" stroke-dasharray="1 1" />
          <path d="M18.5 3V14M20.5 3V14" stroke="#064" stroke-dasharray="1 2" />
        </g>
        <svg v-for="(c, i) in cams" :key="'cm' + i" :x="c[0]" :y="c[1]" :width="c[3] || 25.5" :height="c[4] || 25.5" viewBox="0 0 25 25" preserveAspectRatio="none">
          <rect width="25" height="25" fill="#8c8c8c" /><rect x=".8" y=".8" width="23.4" height="23.4" fill="#e6e6e6" />
          <rect x="2.4" y="2.4" width="20.2" height="20.2" fill="#c8c8c8" />
          <g :transform="flips[c[2]]" fill="none" stroke="#202020" :stroke-width="c[3] > 30 ? 0.9 : 1.25" stroke-linejoin="round">
            <circle cx="7" cy="8.8" r="2.9" /><circle cx="14" cy="7.9" r="3.6" /><rect x="4" y="11.8" width="12.4" height="8" rx="1.3" fill="#c8c8c8" />
            <path d="M17 15.8L21 12.4V20Z" /><path d="M10 17.4H13.4" />
          </g>
        </svg>

        <g v-for="(t, i) in tags" :key="'g' + i">
          <rect :x="t[0] + t[6] / 2" :y="t[1] + t[6] / 2" :width="t[2] - t[6]" :height="t[3] - t[6]" :fill="t[4]" stroke="#000" :stroke-width="t[6]" />
          <text :x="t[0] + t[2] / 2 - t[7] / 2" :y="t[1] + t[3] / 2 + 4.5" :textLength="t[7]" lengthAdjust="spacingAndGlyphs" class="tm" font-size="12.5">{{ t[5] }}</text>
        </g>
        <g v-for="(t, i) in telegrams" :key="'tg' + i" :transform="`translate(${t[0]} ${t[1]})`">
          <circle r="7" fill="#2ba0dc" /><path d="M-4.6 -.2L4 -3.6L2.8 3.8L.2 1.9L-1.2 3.3L-1.4 1Z" fill="#fff" /><path d="M-1.4 1L2.6 -2.4" stroke="#9ad0ee" stroke-width=".6" />
        </g>
        <g v-for="(k, i) in keys" :key="'ky' + i">
          <rect :x="k[0] + .5" :y="k[1] + .5" :width="k[2] - 1" :height="k[3] - 1" :fill="`url(#${k[5]})`" stroke="#a0a0a0" />
          <text :x="k[0] + (k[2] - keyWidth(k[4])) / 2" :y="k[1] + k[3] / 2 + 4.5" :textLength="keyWidth(k[4])" lengthAdjust="spacingAndGlyphs" class="t" font-size="12" fill="#181818">{{ k[4] }}</text>
        </g>

        <!-- remote support tab -->
        <path d="M1920 937H1900Q1895 937 1895 942V970Q1895 975 1899 977L1920 990Z" fill="#fff" />
        <rect x="1899" y="943" width="20" height="20" fill="#1e90e0" /><circle cx="1909" cy="953" r="9" fill="#fff" />
        <path d="M1901.5 953L1906 949.5V952H1912V949.5L1916.5 953L1912 956.5V954H1906V956.5Z" fill="#1e80d0" />
      </svg>
    </main>
  </div>
</template>

<style>
html, body { background: #000; overflow: hidden; }
</style>

<style scoped>
.screen { width: 1920px; height: 1080px; display: flex; flex-direction: column; background: #000; color: #fff; overflow: hidden; font-family: "DejaVu Sans", sans-serif; }
svg { display: block; }
button { padding: 0; margin: 0; border: 1px solid #a8a8a8; color: #111; font: 12.5px "DejaVu Sans Condensed", "DejaVu Sans", sans-serif; letter-spacing: -0.2px; }
.dark { background: linear-gradient(#8e8e8e, #595959 45%, #7e7e7e); }
.light { background: linear-gradient(#bdbdbd, #dadada 50%, #c6c6c6); border-color: #dedede; }
.mid { background: linear-gradient(#b8b8b8, #8c8c8c 50%, #a4a4a4); }

.a, .am, .ah { font-family: "Liberation Sans", sans-serif; }
.ab { font-family: "Liberation Sans", sans-serif; font-weight: 700; }
.t { font-family: "DejaVu Sans", sans-serif; }
.tm { font-family: "Noto Sans", sans-serif; font-weight: 600; }
.tb { font-family: "DejaVu Sans", sans-serif; font-weight: 700; }
.s { font-family: "DejaVu Serif", serif; font-weight: 700; }
.m { font-family: "DejaVu Sans Mono", monospace; font-weight: 700; }
.mr { font-family: "DejaVu Sans Mono", monospace; }
.dash { stroke: #555; stroke-dasharray: 2 1; fill: none; }

.top { height: 73px; display: flex; flex: none; }
.nav { display: grid; grid-template-columns: repeat(4, 80px); column-gap: 3px; grid-template-rows: 28px 38px; row-gap: 2px; margin: 3px 0 0 11px; }
.nav .dark { height: 28px; }
.mini { width: 20px; height: 20px; margin: 45px 6px 0 7px; font-size: 10px; flex: none; }
.pairs { display: grid; grid-template-columns: 82px 93px; grid-template-rows: 30px 30px; gap: 5px 3px; margin-top: 8px; }
.ind { color: #000; font: 700 31.5px/32px "DejaVu Sans Mono", monospace; text-align: center; height: 30px; white-space: nowrap; }
.ind.grey { background: linear-gradient(#d4d4d6, #f4f4f4 50%, #d4d4d6); }
.ind.yellow { background: linear-gradient(#ff0, #f0f0f0 50%, #ff0); }
.ind.green { background: linear-gradient(#0f0, #f0f0f0 50%, #0f0); }
.reset { width: 64px; margin: 0 5px 0 5px; display: flex; flex-direction: column; font-size: 9.5px; font-weight: 700; }
.reset span { height: 13px; line-height: 13px; margin: 29px 0 0 -3px; text-align: center; letter-spacing: -0.4px; }
.past { width: 80px; display: flex; flex-direction: column; font-size: 9px; font-weight: 700; }
.past span { height: 11px; line-height: 11px; text-align: center; letter-spacing: -0.4px; margin-left: -2px; }
.past .ind + .ind { margin-top: 1px; }
.board, .clock { flex: none; }
.board { overflow: visible; }
.speeds { display: flex; flex-direction: column; width: 50px; gap: 1px; padding-top: 1px; flex: none; }
.speeds button { height: 23px; }

.trend { height: 153px; display: flex; flex: none; }
.tools { width: 36px; background: #333; display: flex; flex-direction: column; align-items: center; padding-top: 18px; box-sizing: border-box; gap: 15px; }
.tools svg:nth-child(2) { margin-top: 2px; }

.hall { display: grid; height: 854px; }
.hall > * { grid-area: 1 / 1; }
.stats { z-index: 1; width: 260px; height: 490px; padding: 5px 0 0 5px; display: flex; flex-direction: column; font: 13.9px/14px "Liberation Sans", sans-serif; color: #e4e4e4; box-sizing: border-box; -webkit-text-stroke: 0.4px #e4e4e4; }
.actions { display: flex; gap: 4px; height: 20px; margin-bottom: 8px; flex: none; -webkit-text-stroke: 0; }
.actions button:first-child { width: 60px; }
.actions button:last-child { width: 30px; }
.row { display: grid; grid-template-columns: 50px 40px 46px 41px 41px 1fr; flex: none; margin-left: 5px; }
.row i { font-style: normal; width: 50px; text-align: center; }
.row b { font-weight: 400; margin-left: -10px; white-space: nowrap; }
.row.head { height: 15px; }
.row.head b { margin-left: 1px; }
.row.head b:last-child { margin-left: -1px; }
</style>
